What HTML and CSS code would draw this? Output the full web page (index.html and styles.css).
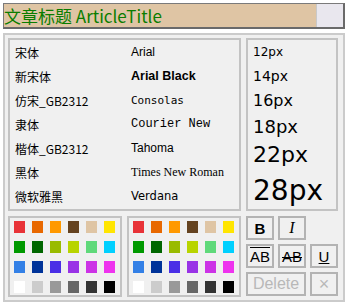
FILE: index.html
```html
<!DOCTYPE html>
<html>
<head>
<meta charset="utf-8">
<link rel="stylesheet" href="styles.css">
</head>
<body>
<div class="title-bar">
  <div class="title-input">文章标题 ArticleTitle</div>
  <div class="title-btn"></div>
</div>
<div class="editor">
  <div class="fonts">
    <div class="font-row"><span class="cn">宋体</span><span class="f-arial">Arial</span></div>
    <div class="font-row"><span class="cn">新宋体</span><span class="f-black">Arial Black</span></div>
    <div class="font-row"><span class="cn">仿宋_GB2312</span><span class="f-consolas">Consolas</span></div>
    <div class="font-row"><span class="cn">隶体</span><span class="f-courier">Courier New</span></div>
    <div class="font-row"><span class="cn">楷体_GB2312</span><span class="f-tahoma">Tahoma</span></div>
    <div class="font-row"><span class="cn">黑体</span><span class="f-times">Times New Roman</span></div>
    <div class="font-row"><span class="cn">微软雅黑</span><span class="f-verdana">Verdana</span></div>
  </div>
  <div class="sizes">
    <div class="size s12">12px</div>
    <div class="size s14">14px</div>
    <div class="size s16">16px</div>
    <div class="size s18">18px</div>
    <div class="size s22">22px</div>
    <div class="size s28">28px</div>
  </div>
  <div class="colors-wrap">
    <div class="colors">
      <i style="background:#e83338"></i><i style="background:#e86800"></i><i style="background:#ff9900"></i><i style="background:#654320"></i><i style="background:#dfc5a4"></i><i style="background:#ffe500"></i>
      <i style="background:#009900"></i><i style="background:#006600"></i><i style="background:#99bb00"></i><i style="background:#b8d400"></i><i style="background:#5fd97a"></i><i style="background:#00d0ff"></i>
      <i style="background:#3380e6"></i><i style="background:#003399"></i><i style="background:#4a2fe6"></i><i style="background:#9933e6"></i><i style="background:#cc33e6"></i><i style="background:#ee33ee"></i>
      <i style="background:#ffffff"></i><i style="background:#cccccc"></i><i style="background:#999999"></i><i style="background:#666666"></i><i style="background:#333333"></i><i style="background:#000000"></i>
    </div>
    <div class="colors">
      <i style="background:#e83338"></i><i style="background:#e86800"></i><i style="background:#ff9900"></i><i style="background:#654320"></i><i style="background:#dfc5a4"></i><i style="background:#ffe500"></i>
      <i style="background:#009900"></i><i style="background:#006600"></i><i style="background:#99bb00"></i><i style="background:#b8d400"></i><i style="background:#5fd97a"></i><i style="background:#00d0ff"></i>
      <i style="background:#3380e6"></i><i style="background:#003399"></i><i style="background:#4a2fe6"></i><i style="background:#9933e6"></i><i style="background:#cc33e6"></i><i style="background:#ee33ee"></i>
      <i style="background:#ffffff"></i><i style="background:#cccccc"></i><i style="background:#999999"></i><i style="background:#666666"></i><i style="background:#333333"></i><i style="background:#000000"></i>
    </div>
  </div>
  <div class="tools">
    <div class="tbtn b-bold">B</div>
    <div class="tbtn b-italic">I</div>
    <div class="tbtn empty"></div>
    <div class="tbtn b-over">AB</div>
    <div class="tbtn b-strike">AB</div>
    <div class="tbtn b-under">U</div>
    <div class="tbtn b-delete">Delete</div>
    <div class="tbtn b-close">×</div>
  </div>
</div>
</body>
</html>
```
FILE: styles.css
```css
html, body {
  margin: 0;
  background: #ffffff;
}
body {
  padding: 3px 0 0 3px;
  font-family: "Noto Sans CJK SC", sans-serif;
}
.title-bar {
  display: flex;
  height: 26px;
  box-sizing: border-box;
  border: 1px solid #7a7a7a;
  border-right: 2px solid #6a6a6a;
  border-bottom: 2px solid #6a6a6a;
}
.title-input {
  flex: 1;
  background: #dfc5a4;
  color: #0a7d00;
  font-size: 17px;
  line-height: 23px;
  white-space: nowrap;
  overflow: hidden;
}
.title-btn {
  width: 26px;
  background: #e9e7ee;
  border-left: 1px solid #c9c9c9;
}
.editor {
  margin-top: 4px;
  box-sizing: border-box;
  width: 342px;
  border: 2px solid #cbcbcb;
  background: #f0f0f0;
  padding: 3px 5px 3px 3px;
  display: grid;
  grid-template-columns: 233px 92px;
  grid-template-rows: 173px 81px;
  column-gap: 5px;
  row-gap: 5px;
}
.fonts {
  border: 2px solid #c3c3c3;
  display: flex;
  flex-direction: column;
}
.font-row {
  display: flex;
  height: 24px;
  align-items: center;
  font-size: 12px;
  color: #000;
}
.font-row .cn {
  width: 121px;
  padding-left: 5px;
  box-sizing: border-box;
  font-family: "Noto Sans CJK SC", sans-serif;
}
.f-arial { font-family: "Liberation Sans", Arial, sans-serif; font-size: 12px; }
.f-black { font-family: "Liberation Sans", Arial, sans-serif; font-weight: 900; font-size: 12.5px; }
.f-consolas { font-family: "DejaVu Sans Mono", monospace; font-size: 11px; }
.f-courier { font-family: "Liberation Mono", monospace; font-size: 12px; }
.f-tahoma { font-family: "Liberation Sans", sans-serif; font-size: 12px; }
.f-times { font-family: "Liberation Serif", serif; font-size: 12px; }
.f-verdana { font-family: "DejaVu Sans", sans-serif; font-size: 11.5px; }
.sizes {
  border: 2px solid #c3c3c3;
  padding: 0 0 0 5px;
  display: flex;
  flex-direction: column;
  font-family: "DejaVu Sans", sans-serif;
  color: #000;
}
.size { line-height: 1; box-sizing: border-box; }
.s12 { font-size: 12px; height: 22px; padding-top: 6px; }
.s14 { font-size: 14px; height: 29px; padding-top: 7px; }
.s16 { font-size: 16px; height: 22px; padding-top: 2px; }
.s18 { font-size: 18px; height: 30px; padding-top: 5px; }
.s22 { font-size: 22px; height: 28px; padding-top: 1px; }
.s28 { font-size: 28px; height: 38px; padding-top: 6px; }
.colors-wrap {
  display: grid;
  grid-template-columns: 114px 114px;
  column-gap: 5px;
}
.colors {
  border: 2px solid #c3c3c3;
  padding: 3px 0 0 4px;
  display: grid;
  grid-template-columns: repeat(6, 11px);
  grid-auto-rows: 12px;
  column-gap: 7px;
  row-gap: 8px;
}
.colors i {
  display: block;
}
.tools {
  display: grid;
  grid-template-columns: 28px 28px 28px;
  grid-template-rows: 24px 24px 24px;
  column-gap: 4px;
  row-gap: 4px;
}
.tbtn {
  box-sizing: border-box;
  border: 2px solid #b3b3b3;
  display: flex;
  align-items: center;
  justify-content: center;
  font-family: "Liberation Sans", sans-serif;
  color: #000;
}
.tbtn.empty { border: none; }
.b-bold { font-weight: bold; font-size: 15px; }
.b-italic { font-family: "Liberation Serif", serif; font-style: italic; font-size: 16px; }
.b-over { font-size: 15px; text-decoration: overline; }
.b-strike { font-size: 15px; text-decoration: line-through; }
.b-under { font-size: 15px; text-decoration: underline; }
.b-delete { grid-column: 1 / span 2; color: #b8b8b8; font-size: 16px; }
.b-close { color: #b8b8b8; font-size: 18px; }
```
